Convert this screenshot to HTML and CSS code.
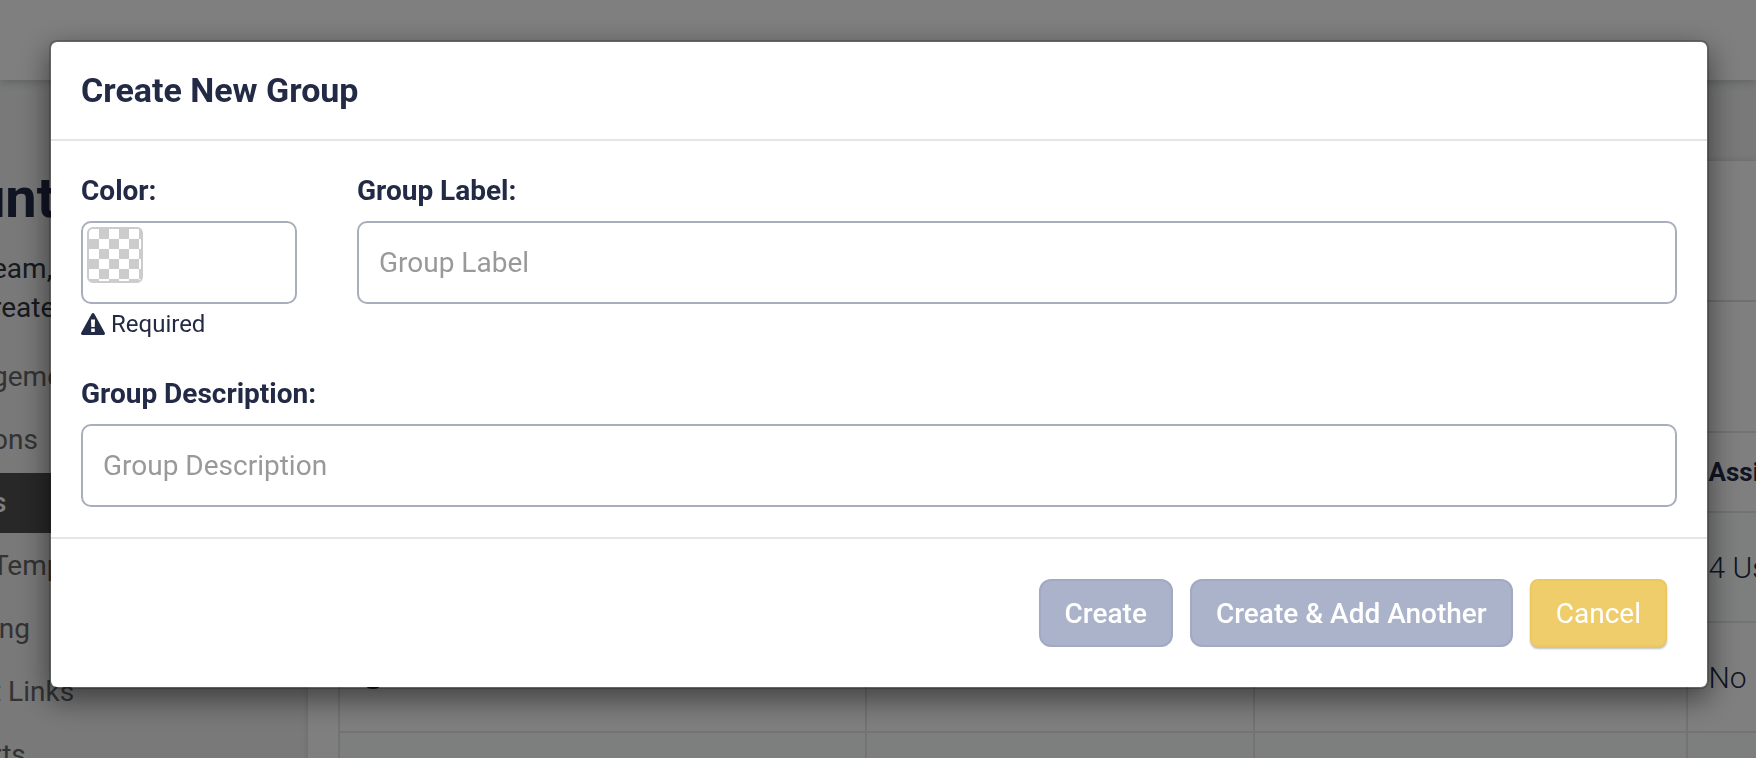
FILE: index.html
```html
<!DOCTYPE html>
<html lang="en">
<head>
  <meta charset="utf-8">
  <title>Create New Group</title>
  <link rel="stylesheet" href="styles.css">
</head>
<body>
  <div class="page">
    <header class="topbar"></header>
    <div class="layout">
      <aside class="sidebar">
        <h1>unt</h1>
        <p class="intro">eam,<br>reate</p>
        <nav>
          <a href="#">geme</a>
          <a href="#">ons</a>
          <a href="#" class="active">s</a>
          <a href="#">Temp</a>
          <a href="#">ing</a>
          <a href="#">t Links</a>
          <a href="#">rts</a>
        </nav>
      </aside>
      <main class="panel">
        <div class="panel-header"></div>
        <div class="panel-tools"></div>
        <table class="groups">
          <colgroup>
            <col class="col-name">
            <col class="col-description">
            <col class="col-type">
            <col>
          </colgroup>
          <thead>
            <tr><th></th><th></th><th></th><th>Assi</th></tr>
          </thead>
          <tbody>
            <tr><td></td><td></td><td></td><td>4 Us</td></tr>
            <tr>
              <td><span class="group-dot"></span></td>
              <td></td>
              <td></td>
              <td>No U</td>
            </tr>
            <tr><td></td><td></td><td></td><td></td></tr>
          </tbody>
        </table>
      </main>
    </div>
  </div>

  <div class="modal-overlay">
    <form class="modal" role="dialog" aria-labelledby="modalTitle">
      <div class="modal-header">
        <h2 id="modalTitle">Create New Group</h2>
      </div>
      <div class="modal-body">
        <div class="row">
          <div class="field field-color">
            <label for="groupColor">Color:</label>
            <div class="color-box">
              <button type="button" class="swatch" id="groupColor"></button>
            </div>
            <p class="required">
              <svg width="24" height="22" viewBox="0 0 24 22"><path fill="currentColor" fill-rule="evenodd" d="M10.700 0.800a1.500 1.500 0 0 1 2.600 0L23.800 19.800a1.500 1.500 0 0 1-1.300 2.200H1.500a1.500 1.500 0 0 1-1.300-2.200ZM10 6.500l.3 7.500h3.400l.3-7.500ZM10.200 15.500v3.500h3.600v-3.500Z"/></svg>
              Required
            </p>
          </div>
          <div class="field field-label">
            <label for="groupLabel">Group Label:</label>
            <input type="text" id="groupLabel" placeholder="Group Label">
          </div>
        </div>
        <div class="row">
          <div class="field field-full">
            <label for="groupDescription">Group Description:</label>
            <input type="text" id="groupDescription" placeholder="Group Description">
          </div>
        </div>
      </div>
      <div class="modal-footer">
        <button type="submit" class="btn btn-primary">Create</button>
        <button type="button" class="btn btn-primary">Create &amp; Add Another</button>
        <button type="button" class="btn btn-cancel">Cancel</button>
      </div>
    </form>
  </div>
</body>
</html>
```

FILE: styles.css
```css
* {
  box-sizing: border-box;
  margin: 0;
  padding: 0;
}
body {
  height: 100vh;
  overflow: hidden;
  font-family: Roboto, sans-serif;
  font-size: 28px;
  color: #232a46;
  background: #f2f2f2;
}

/* page behind the modal */
.page {
  height: 100vh;
  overflow: hidden;
}
.topbar {
  position: relative;
  height: 80px;
  background: #fff;
  box-shadow: 0 2px 8px rgba(40, 60, 80, 0.25);
}
.layout {
  display: flex;
}
.sidebar {
  flex: 0 0 316px;
  margin-left: -8px;
  padding-top: 80px;
}
.sidebar h1 {
  margin-left: -18px;
  font-size: 56px;
  line-height: 76px;
}
.intro {
  padding: 13px 0 20px;
  line-height: 39px;
  color: #2e343c;
}
.sidebar nav {
  display: flex;
  flex-direction: column;
  gap: 3px;
}
.sidebar a {
  line-height: 60px;
  color: #666;
  text-decoration: none;
}
.sidebar a.active {
  background: #505050;
  color: #fff;
  font-weight: 500;
}
.panel {
  flex: 1;
  min-width: 0;
  margin-top: 81px;
  padding-left: 30px;
  overflow: hidden;
  background: #fff;
  box-shadow: 0 0 6px rgba(0, 0, 0, 0.15);
}
.panel-header {
  height: 141px;
  margin-left: -30px;
  border-bottom: 2px solid #e0e0e0;
}
.panel-tools {
  height: 129px;
}
.groups {
  width: 104%;
  table-layout: fixed;
  border-collapse: collapse;
  white-space: nowrap;
}
.col-name {
  width: 35.8%;
}
.col-description {
  width: 26.3%;
}
.col-type {
  width: 29.4%;
}
.groups th,
.groups td {
  height: 110px;
  padding-left: 21px;
  border: 2px solid #e4e6e5;
  font-size: 30px;
  font-weight: 300;
  text-align: left;
}
.groups th {
  height: 80px;
  font-size: 26px;
  font-weight: 700;
}
.groups tbody tr:nth-child(odd) {
  background: #fbfffd;
}
.group-dot {
  display: block;
  width: 24px;
  height: 24px;
  border-radius: 50%;
  background: #3a1020;
}

/* modal */
.modal-overlay {
  position: fixed;
  inset: 0;
  padding: 40px 47px 0 49px;
  background: rgba(0, 0, 0, 0.5);
}
.modal {
  border: 2px solid rgba(0, 0, 0, 0.2);
  border-radius: 8px;
  background: #fff;
  background-clip: padding-box;
  box-shadow: 0 10px 30px rgba(0, 0, 0, 0.5);
}
.modal-header {
  padding: 24px 30px;
  border-bottom: 2px solid #e5e5e5;
}
.modal-header h2 {
  font-size: 34px;
  line-height: 49px;
}
.modal-body {
  display: flex;
  flex-direction: column;
  gap: 30px;
  padding: 30px 0;
}
.row {
  display: flex;
}
.field {
  padding: 0 30px;
}
.field-color {
  width: 16.6667%;
}
.field-label {
  width: 83.3333%;
}
.field-full {
  width: 100%;
}
.field label {
  display: block;
  margin-bottom: 10px;
  font-weight: 700;
  line-height: 40px;
}
.field input,
.color-box {
  display: block;
  width: 100%;
  height: 83px;
  border: 2px solid #a9aebc;
  border-radius: 10px;
  background: #fff;
}
.field input {
  padding: 0 20px;
  font: inherit;
  color: #232a46;
}
.field input::placeholder {
  color: #999;
}
.color-box {
  padding: 4px;
}
.swatch {
  display: block;
  width: 56px;
  height: 56px;
  border: 2px solid #ccc;
  border-radius: 6px;
  background: conic-gradient(#ccc 25%, #fff 0 50%, #ccc 0 75%, #fff 0) 0 0 / 20px 20px;
  cursor: pointer;
}
.required {
  display: flex;
  align-items: center;
  gap: 6px;
  font-size: 24px;
  line-height: 40px;
}
.modal-footer {
  display: flex;
  justify-content: flex-end;
  gap: 17px;
  padding: 40px;
  border-top: 2px solid #e5e5e5;
}
.btn {
  height: 68px;
  padding: 0 24px;
  border: 2px solid #a2a9c3;
  border-radius: 12px;
  background: #abb3ca;
  color: #fff;
  font: 500 28px Roboto, sans-serif;
  cursor: pointer;
}
.btn-cancel {
  border-color: #edc85f;
  border-radius: 8px;
  background: #efcd6b;
  font-weight: 400;
  box-shadow: 0 2px 2px rgba(0, 0, 0, 0.25);
}
```
